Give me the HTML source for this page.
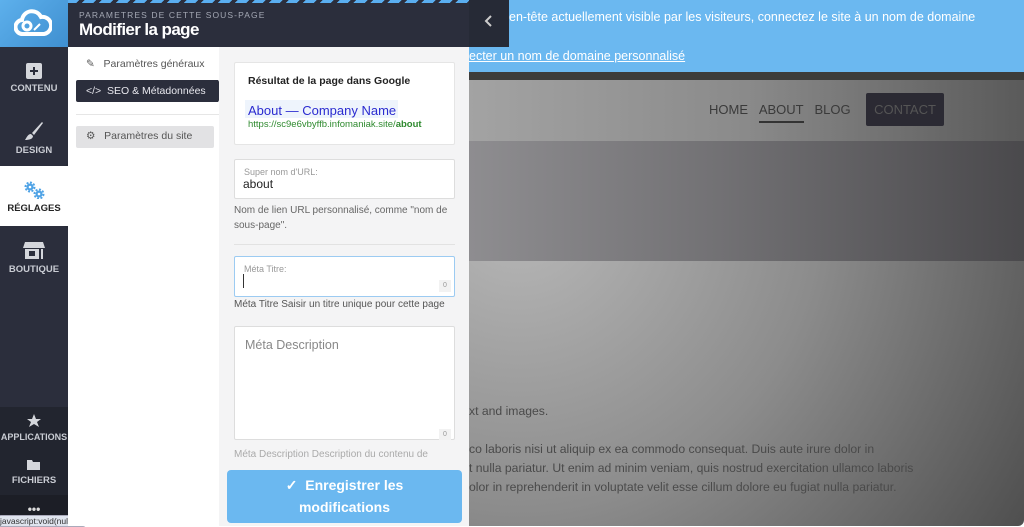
<!DOCTYPE html>
<html><head><meta charset="utf-8"><style>
*{box-sizing:border-box;margin:0;padding:0}
body{width:1024px;height:526px;overflow:hidden;position:relative;font-family:"Liberation Sans",sans-serif;background:#fff}
.abs{position:absolute}
.nav{position:absolute;left:0;width:68px;color:#c9ccd3;font-size:9.5px;font-weight:bold;text-align:center}
.nav svg{display:block;margin:0 auto 4px}
</style></head><body>
<div class="abs" style="left:469px;top:0;width:555px;height:72px;background:#6bb8f0;color:#fff;font-size:12.5px">
<div class="abs" style="left:40px;top:10px;white-space:nowrap">en-tête actuellement visible par les visiteurs, connectez le site à un nom de domaine</div>
<div class="abs" style="left:0;top:49px;white-space:nowrap;text-decoration:underline">ecter un nom de domaine personnalisé</div>
</div>
<div class="abs" style="left:469px;top:72px;width:555px;height:8px;background:#3d3d3b"></div>
<div class="abs" style="left:469px;top:80px;width:555px;height:446px;background:radial-gradient(circle at 50px 130px,#b8b8b8 0,#8c8c8c 300px,#4e4e4e 600px);border-bottom-right-radius:6px"></div>
<div class="abs" style="left:469px;top:80px;width:555px;height:61px;background:linear-gradient(90deg,#a3a3a3,#8a8a8a 50%,#5a5a5a);"></div>
<div class="abs" style="left:469px;top:141px;width:555px;height:120px;background:linear-gradient(90deg,#8e8d90,#727174 45%,#4a494c)"></div>
<div class="abs" style="left:709px;top:102px;font-size:13px;color:#3a3a3a;white-space:nowrap">HOME&nbsp;&nbsp;&nbsp;<span style="border-bottom:2px solid #333;padding-bottom:4px">ABOUT</span>&nbsp;&nbsp;&nbsp;BLOG</div>
<div class="abs" style="left:866px;top:93px;width:78px;height:33px;background:#2b2a33;border-radius:2px;color:#555;font-size:13px;line-height:33px;text-align:center">CONTACT</div>
<div class="abs" style="left:469px;top:402px;font-size:12.2px;color:#4a4a4a;line-height:19px;white-space:nowrap">xt and images.<br><br>co laboris nisi ut aliquip ex ea commodo consequat. Duis aute irure dolor in<br>t nulla pariatur. Ut enim ad minim veniam, quis nostrud exercitation ullamco laboris<br>olor in reprehenderit in voluptate velit esse cillum dolore eu fugiat nulla pariatur.</div>

<div class="abs" style="left:0;top:0;width:68px;height:526px;background:#262a36"></div>
<div class="abs" style="left:0;top:0;width:68px;height:47px;background:linear-gradient(135deg,#5db0ec,#3f8fd0)"></div>
<svg class="abs" style="left:14px;top:9px" width="38" height="28" viewBox="0 0 38 28"><path d="M9 25a7 7 0 0 1-1-14 10 10 0 0 1 19-3 8 8 0 0 1 3 17z" fill="none" stroke="#fff" stroke-width="4"/><circle cx="13" cy="17" r="4" fill="none" stroke="#fff" stroke-width="3"/><path d="M20 21l6-6" stroke="#fff" stroke-width="2"/></svg>
<div class="abs" style="left:0;top:47px;width:68px;height:119px;background:#2b2e3c;border-bottom-right-radius:5px"></div>
<div class="abs" style="left:0;top:166px;width:68px;height:60px;background:#fff"></div>
<div class="abs" style="left:0;top:226px;width:68px;height:181px;background:#2b2e3c;border-top-right-radius:5px"></div>
<div class="abs" style="left:0;top:407px;width:68px;height:88px;background:#22252f"></div>
<div class="abs" style="left:0;top:495px;width:68px;height:31px;background:#1c1e26"></div>
<div class="nav" style="top:63px"><svg width="16" height="16"><rect width="16" height="16" rx="2" fill="#d5d7dc"/><path d="M8 4v8M4 8h8" stroke="#2b2e3c" stroke-width="2"/></svg>CONTENU</div>
<div class="nav" style="top:121px"><svg width="20" height="20"><path d="M18 1L8 12l2 2L19 2z" fill="#d5d7dc"/><path d="M7 13c-3 0-4 3-6 6 4 0 8-1 8-4z" fill="#d5d7dc"/></svg>DESIGN</div>
<div class="nav" style="top:181px;color:#222"><svg width="22" height="18"><circle cx="7" cy="6" r="3.5" fill="#4fa3e6"/><circle cx="7" cy="6" r="4.5" fill="none" stroke="#4fa3e6" stroke-width="2" stroke-dasharray="2 1.5"/><circle cx="16" cy="13" r="3.5" fill="#4fa3e6"/><circle cx="16" cy="13" r="4.5" fill="none" stroke="#4fa3e6" stroke-width="2" stroke-dasharray="2 1.5"/><circle cx="7" cy="6" r="1.3" fill="#fff"/><circle cx="16" cy="13" r="1.3" fill="#fff"/></svg>RÉGLAGES</div>
<div class="nav" style="top:240px"><svg width="22" height="20"><path d="M2 2h18l2 6H0z" fill="#d5d7dc"/><rect x="2" y="9" width="14" height="10" fill="#d5d7dc"/><rect x="6" y="11" width="6" height="5" fill="#2b2e3c"/><rect x="18" y="9" width="2" height="10" fill="#d5d7dc"/></svg>BOUTIQUE</div>
<div class="nav" style="top:414px;font-size:9px"><svg width="14" height="14"><path d="M7 0l2 5h5l-4 3 2 5-5-3-5 3 2-5-4-3h5z" fill="#d5d7dc"/></svg>APPLICATIONS</div>
<div class="nav" style="top:459px"><svg width="14" height="12"><path d="M0 1h5l1 2h7v8H0z" fill="#d5d7dc"/></svg>FICHIERS</div>
<div class="nav" style="top:502px;font-size:12px;color:#ddd">•••</div>
<div class="abs" style="left:-2px;top:515px;width:88px;height:12px;background:#dfe4ee;border:1px solid #aab;border-radius:3px;font-size:8.5px;color:#333;line-height:10px;padding-left:1px;white-space:nowrap;overflow:hidden">javascript:void(null)</div>

<div class="abs" style="left:68px;top:0;width:441px;height:47px;background:#2b2e3c"></div>
<div class="abs" style="left:68px;top:0;width:441px;height:3px;background:repeating-linear-gradient(135deg,#5aaef0 0 8px,#2b2e3c 8px 12px)"></div>
<div class="abs" style="left:79px;top:10px;font-size:8.5px;letter-spacing:1.1px;color:#a4a8b4">PARAMETRES DE CETTE SOUS-PAGE</div>
<div class="abs" style="left:79px;top:20px;font-size:17px;font-weight:bold;color:#fff;letter-spacing:-0.6px">Modifier la page</div>
<div class="abs" style="left:469px;top:0;width:40px;height:47px;background:#262a36"></div>
<svg class="abs" style="left:484px;top:14px" width="10" height="14"><path d="M7 2L2 7l5 5" fill="none" stroke="#ccc" stroke-width="2"/></svg>

<div class="abs" style="left:68px;top:47px;width:151px;height:479px;background:#fff"></div>
<div class="abs" style="left:86px;top:58px;font-size:10.5px;color:#555">✎&nbsp;&nbsp;&nbsp;Paramètres généraux</div>
<div class="abs" style="left:76px;top:80px;width:148px;height:22px;background:#2b2e3c;border-radius:2px;clip-path:polygon(0 0,96% 0,100% 50%,96% 100%,0 100%)"></div>
<div class="abs" style="left:86px;top:85px;font-size:10.5px;color:#e8e8ee">&lt;/&gt;&nbsp;&nbsp;SEO &amp; Métadonnées</div>
<div class="abs" style="left:76px;top:114px;width:143px;height:1px;background:#e6e6e6"></div>
<div class="abs" style="left:76px;top:126px;width:138px;height:22px;background:#e2e2e4;border-radius:2px"></div>
<div class="abs" style="left:86px;top:130px;font-size:10.5px;color:#555">⚙&nbsp;&nbsp;&nbsp;Paramètres du site</div>

<div class="abs" style="left:219px;top:47px;width:250px;height:479px;background:#f4f4f5"></div>
<div class="abs" style="left:234px;top:62px;width:221px;height:83px;background:#fff;border:1px solid #e5e5e5;border-radius:2px"></div>
<div class="abs" style="left:248px;top:75px;font-size:10.5px;font-weight:bold;color:#222">Résultat de la page dans Google</div>
<div class="abs" style="left:245px;top:100px;width:153px;height:18px;background:#eef4fc"></div>
<div class="abs" style="left:248px;top:103px;font-size:13px;color:#2b2bd0">About — Company Name</div>
<div class="abs" style="left:248px;top:119px;font-size:9.5px;color:#2f8a2f">https://sc9e6vbyffb.infomaniak.site/<b>about</b></div>
<div class="abs" style="left:234px;top:159px;width:221px;height:40px;background:#fff;border:1px solid #ddd;border-radius:2px"></div>
<div class="abs" style="left:244px;top:167px;font-size:9px;color:#999">Super nom d'URL:</div>
<div class="abs" style="left:243px;top:177px;font-size:12px;color:#222">about</div>
<div class="abs" style="left:234px;top:203px;width:230px;font-size:10px;color:#666;line-height:15px">Nom de lien URL personnalisé, comme "nom de sous-page".</div>
<div class="abs" style="left:234px;top:244px;width:221px;height:1px;background:#e2e2e2"></div>
<div class="abs" style="left:234px;top:256px;width:221px;height:41px;background:#fff;border:1px solid #9ccbf2;border-radius:2px"></div>
<div class="abs" style="left:244px;top:264px;font-size:9px;color:#999">Méta Titre:</div>
<div class="abs" style="left:243px;top:274px;width:1px;height:14px;background:#333"></div>
<div class="abs" style="left:439px;top:280px;width:12px;height:12px;background:#f2f2f2;font-size:7px;color:#999;text-align:center;line-height:12px">0</div>
<div class="abs" style="left:234px;top:299px;font-size:10px;color:#555">Méta Titre Saisir un titre unique pour cette page</div>
<div class="abs" style="left:234px;top:326px;width:221px;height:114px;background:#fff;border:1px solid #ddd;border-radius:2px"></div>
<div class="abs" style="left:245px;top:338px;font-size:12.5px;color:#888">Méta Description</div>
<div class="abs" style="left:439px;top:429px;width:12px;height:11px;background:#f2f2f2;font-size:7px;color:#999;text-align:center;line-height:11px">0</div>
<div class="abs" style="left:234px;top:449px;font-size:10px;color:#aaa">Méta Description Description du contenu de</div>
<div class="abs" style="left:227px;top:470px;width:235px;height:53px;background:#6bb8f0;border-radius:4px;color:#fff;font-size:14px;font-weight:bold;text-align:center;line-height:22px;padding-top:4px">✓&nbsp;&nbsp;Enregistrer les<br>modifications</div>
</body></html>
